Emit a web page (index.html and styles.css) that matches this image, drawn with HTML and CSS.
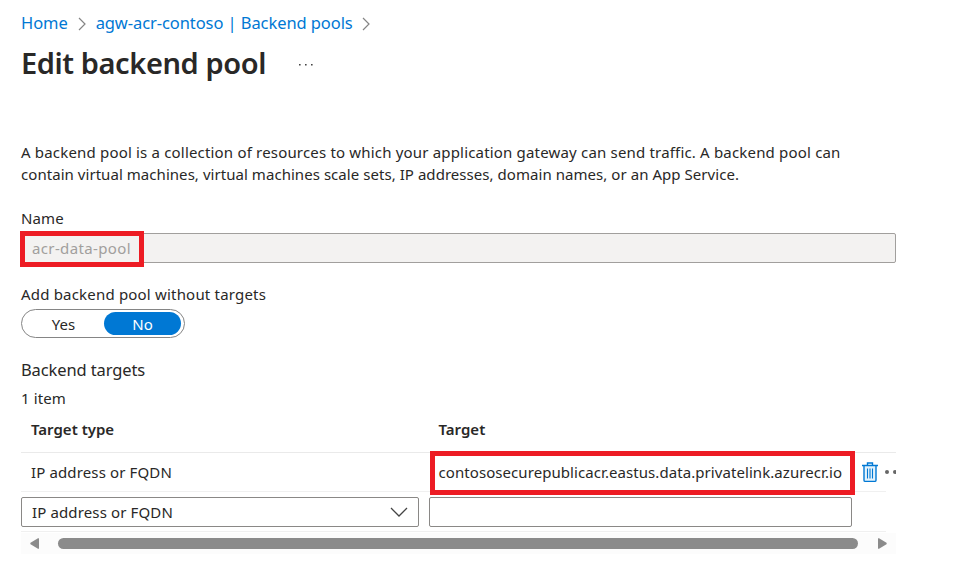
FILE: index.html
```
<!DOCTYPE html>
<html lang="en">
<head>
<meta charset="utf-8">
<title>Edit backend pool</title>
<link rel="stylesheet" href="styles.css">
</head>
<body>
<main class="page">
  <nav class="crumbs">
    <a class="home">Home</a>
    <svg class="sep" width="8" height="14" viewBox="0 0 8 14"><path d="M1 1l6 6-6 6"/></svg>
    <a>agw-acr-contoso | Backend pools</a>
    <svg class="sep" width="8" height="14" viewBox="0 0 8 14"><path d="M1 1l6 6-6 6"/></svg>
  </nav>
  <header class="heading">
    <h1>Edit backend pool</h1>
    <svg class="more" width="14" height="2" viewBox="0 0 14 2"><path d="M0 0h1.6v1.6H0zM6 0h1.6v1.6H6zM12 0h1.6v1.6H12z"/></svg>
  </header>
  <p class="intro"><span class="line-a">A backend pool is a collection of resources to which your application gateway can send traffic. A backend pool can</span><br><span class="line-b">contain virtual machines, virtual machines scale sets, IP addresses, domain names, or an App Service.</span></p>
  <label class="label name-label">Name</label>
  <div class="name-field"><span>acr-data-pool</span><div class="mark mark-name"></div></div>
  <label class="label add-label">Add backend pool without targets</label>
  <div class="toggle"><span class="option">Yes</span><span class="option selected">No</span></div>
  <h2>Backend targets</h2>
  <div class="count">1 item</div>
  <section class="targets">
    <div class="row head"><div>Target type</div><div>Target</div></div>
    <div class="row item">
      <div>IP address or FQDN</div>
      <div class="fqdn">contososecurepublicacr.eastus.data.privatelink.azurecr.io<div class="mark mark-target"></div></div>
      <div class="actions">
        <svg width="16" height="21" viewBox="0 0 16 21" class="trash"><path class="fill" d="M2 3.5h12v16H2z"/><path d="M0 3.5h16M5.500 3.500V1h5v2.500M2 3.500v14.700q0 1.200 1.200 1.200h9.600q1.200 0 1.200-1.200V3.500"/><path class="thin" d="M5.500 6.500v10M8 6.500v10M10.500 6.500v10"/></svg>
        <svg width="11" height="4" viewBox="0 0 11 4" class="dots"><circle cx="2" cy="2" r="2"/><circle cx="10" cy="2" r="2"/></svg>
      </div>
    </div>
    <div class="editor">
      <div class="box select"><span>IP address or FQDN</span><svg width="18" height="10" viewBox="0 0 18 10"><path d="M1 1l8 8 8-8"/></svg></div>
      <div class="box input"></div>
    </div>
    <div class="scrollbar">
      <svg width="9" height="11" viewBox="0 0 9 11"><path d="M9 .6Q9 0 8 .3L.5 4.700Q0 5.500 .5 6.300L8 10.700Q9 11 9 10.400z"/></svg>
      <div class="thumb"></div>
      <svg width="9" height="11" viewBox="0 0 9 11"><path d="M0 .6Q0 0 1 .3L8.500 4.700Q9 5.500 8.500 6.300L1 10.700Q0 11 0 10.400z"/></svg>
    </div>
  </section>
</main>
</body>
</html>
```
FILE: styles.css
```
* { box-sizing: border-box; }
body {
  margin: 0;
  background: #fff;
  color: #292827;
  font: 15px/22px "Noto Sans", "Open Sans", sans-serif;
}
svg { display: block; flex: none; }
.page { width: 896px; padding-left: 21px; }
.crumbs {
  display: flex;
  align-items: center;
  height: 24px;
  margin-top: 11px;
  color: #0078d4;
  font-size: 16.5px;
  letter-spacing: -.08px;
  white-space: nowrap;
}
.crumbs .sep { margin: 1px 10px 0; fill: none; stroke: #858585; stroke-width: 1.2; }
.crumbs .sep:last-child { margin-left: 9px; }
.heading { display: flex; align-items: center; height: 40px; margin-top: 8px; }
h1 { margin: 0; font-size: 29px; font-weight: 600; line-height: 40px; letter-spacing: -.41px; white-space: nowrap; }
.more { margin: 4px 0 0 33px; fill: #444; }
.intro { margin: 58px 0 0; height: 44px; white-space: nowrap; }
.line-a { letter-spacing: .18px; }
.line-b { letter-spacing: .05px; }
.label { display: block; }
.name-label { margin-top: 22px; letter-spacing: .1px; }
.name-field {
  position: relative;
  height: 30px;
  margin-top: 4px;
  padding: 0 10px;
  border: 1px solid #a19f9d;
  border-radius: 2px;
  background: #f3f2f1;
  color: #a19f9d;
  line-height: 29px;
  letter-spacing: .37px;
}
.mark { position: absolute; border: 5px solid #ed1c24; }
.mark-name { left: -2px; top: -3px; width: 124px; height: 36px; }
.add-label { margin-top: 20px; letter-spacing: .19px; }
.toggle {
  display: flex;
  width: 164px;
  height: 29px;
  margin-top: 4px;
  padding: 2px 3px;
  border: 1px solid #858585;
  border-radius: 15px;
}
.option { width: 79px; padding-right: 2px; text-align: center; line-height: 24px; }
.option.selected { width: 77px; height: 23px; padding: 0; border-radius: 12px; background: #0078d4; color: #fff; }
h2 { margin: 21px 0 0; font-size: 16.5px; font-weight: 400; line-height: 22px; letter-spacing: -.12px; }
.count { margin-top: 6px; letter-spacing: .1px; }
.targets { margin-top: 7px; }
.row { display: grid; grid-template-columns: 407.5px 425px 1fr; align-items: center; padding-left: 10px; white-space: nowrap; }
.head { height: 37px; padding-bottom: 10px; border-bottom: 1px solid #eaeaea; font-weight: 600; }
.item {
  height: 39px;
  padding-bottom: 2px;
  letter-spacing: .07px;
  background: linear-gradient(#f0f0f0, #f0f0f0) left bottom / 865px 1px no-repeat;
}
.item > :first-child { letter-spacing: .13px; }
.fqdn { position: relative; }
.mark-target { left: -8.500px; top: -10px; width: 425px; height: 44px; }
.actions { display: flex; align-items: center; }
.trash { margin: 1px 0 0 -2px; fill: none; stroke: #0078d4; stroke-width: 1.4; }
.trash .fill { fill: #e4f3fc; stroke: none; }
.trash .thin { stroke-width: 1.1; }
.dots { margin-left: 7px; fill: #666; }
.editor {
  display: flex;
  gap: 10px;
  height: 40px;
  padding-top: 5px;
  background: linear-gradient(#f0f0f0, #f0f0f0) left bottom / 865px 1px no-repeat;
}
.box { height: 30px; border: 1px solid #8a8886; border-radius: 2px; background: #fff; }
.select { display: flex; width: 398px; padding: 0 10px; align-items: center; justify-content: space-between; letter-spacing: .13px; }
.select svg { fill: none; stroke: #444; stroke-width: 1.3; }
.input { width: 423px; }
.scrollbar { display: flex; align-items: center; height: 21px; margin-top: 1px; padding: 0 9px; background: #fcfcfc; fill: #8b8b8b; }
.thumb { width: 800px; height: 11px; margin: 0 20px 0 19px; border-radius: 6px; background: #8b8b8b; }
```
